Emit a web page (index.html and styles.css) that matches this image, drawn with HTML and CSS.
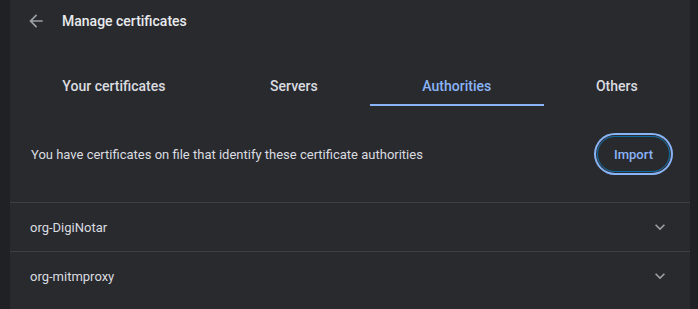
FILE: index.html
```html
<!DOCTYPE html>
<html lang="en">
<head>
    <meta charset="UTF-8">
    <meta name="viewport" content="width=device-width, initial-scale=1.0">
    <title>Manage certificates</title>
    <link rel="stylesheet" href="styles.css">
</head>
<body>
    <div class="page">
        <div class="header">
            <button class="back-button" aria-label="Back">
                <svg viewBox="0 0 24 24" width="20" height="20"><path d="M20 11H7.83l5.59-5.59L12 4l-8 8 8 8 1.41-1.41L7.83 13H20v-2z" fill="currentColor"/></svg>
            </button>
            <h1 class="title">Manage certificates</h1>
        </div>

        <div class="tabs">
            <div class="tab">Your certificates</div>
            <div class="tab">Servers</div>
            <div class="tab selected">Authorities</div>
            <div class="tab">Others</div>
        </div>

        <div class="description">
            <span>You have certificates on file that identify these certificate authorities</span>
            <button class="import-button">Import</button>
        </div>

        <div class="cert-row">
            <span>org-DigiNotar</span>
            <svg class="chevron" viewBox="0 0 24 24" width="20" height="20"><path d="M16.59 8.59L12 13.17 7.41 8.59 6 10l6 6 6-6z" fill="currentColor"/></svg>
        </div>
        <div class="cert-row">
            <span>org-mitmproxy</span>
            <svg class="chevron" viewBox="0 0 24 24" width="20" height="20"><path d="M16.59 8.59L12 13.17 7.41 8.59 6 10l6 6 6-6z" fill="currentColor"/></svg>
        </div>
    </div>
</body>
</html>
```

FILE: styles.css
```css
body {
    margin: 0;
    padding: 0 8px 0 10px;
    background: #202124;
    color: #e8eaed;
    font-family: Roboto, "Liberation Sans", sans-serif;
    font-size: 13px;
    height: 309px;
    overflow: hidden;
}

.page {
    background: #292a2d;
    height: 100%;
}

.header {
    display: flex;
    align-items: center;
    height: 42px;
    padding-left: 16px;
}

.back-button {
    display: flex;
    align-items: center;
    justify-content: center;
    background: none;
    border: none;
    padding: 0;
    width: 20px;
    height: 20px;
    color: #9aa0a6;
}

.title {
    margin: 0 0 0 16px;
    font-size: 14px;
    font-weight: 500;
    color: #e8eaed;
}

.tabs {
    display: flex;
    margin-top: 26px;
}

.tab {
    flex: 1 1 auto;
    display: flex;
    align-items: center;
    justify-content: center;
    height: 36px;
    border-bottom: 2px solid transparent;
    font-size: 14px;
    font-weight: 500;
    color: #dadce0;
}

.tab.selected {
    color: #8ab4f8;
    border-bottom-color: #8ab4f8;
}

.description {
    display: flex;
    align-items: center;
    justify-content: space-between;
    height: 96px;
    padding: 0 20px 0 21px;
    color: #dadce0;
}

.import-button {
    height: 36px;
    padding: 0 16px;
    background: transparent;
    border: 1px solid #0b6ba0;
    border-radius: 18px;
    box-shadow: 0 0 0 1px #292a2d, 0 0 0 3px #8ab4f8;
    color: #8ab4f8;
    font-family: inherit;
    font-size: 13px;
    font-weight: 500;
}

.cert-row {
    display: flex;
    align-items: center;
    justify-content: space-between;
    height: 48px;
    padding: 0 20px;
    border-top: 1px solid #3c4043;
    color: #dadce0;
}

.chevron {
    color: #9aa0a6;
}
```
